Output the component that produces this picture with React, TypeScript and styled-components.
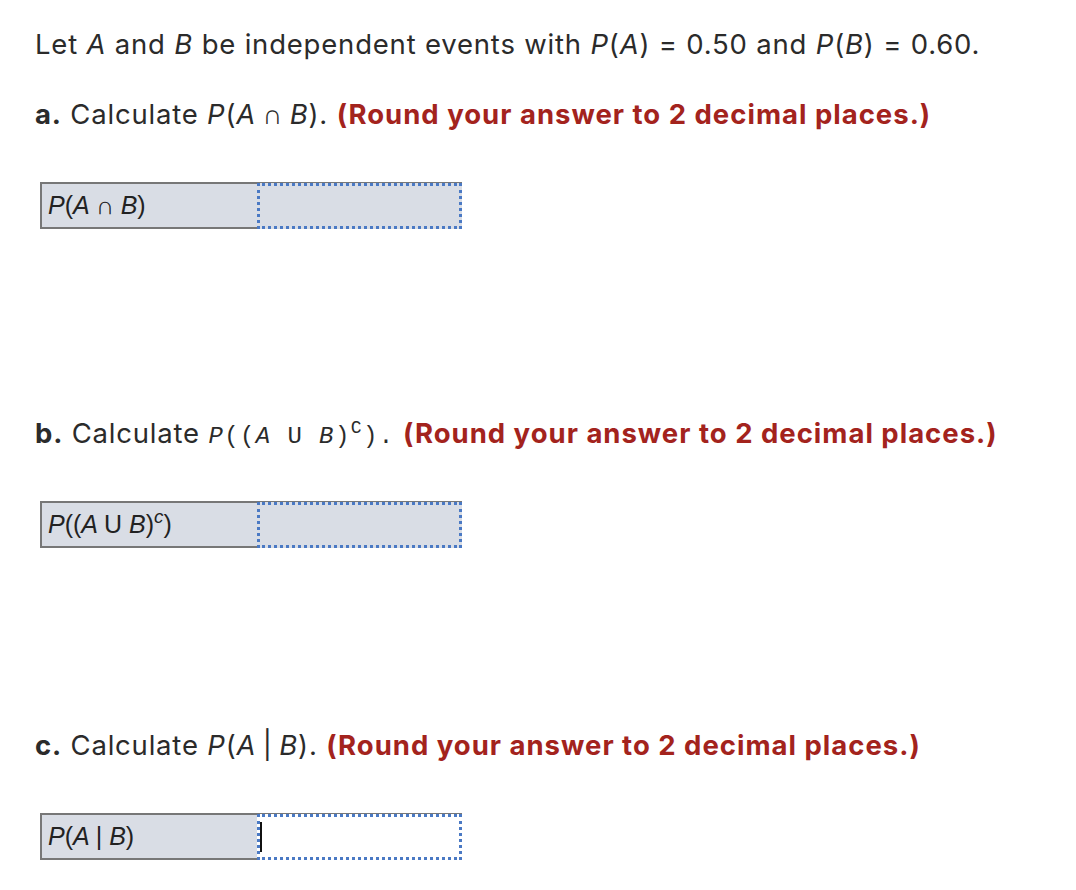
import React from 'react';
import styled, { createGlobalStyle } from 'styled-components';

const GlobalStyle = createGlobalStyle`
  body {
    margin: 0;
    background: #ffffff;
    font-family: Inter, "Open Sans", "Liberation Sans", sans-serif;
    color: #2b2b2b;
  }
`;

const Page = styled.div`
  padding: 24px 0 0 35px;
  width: 1041px;
`;

const Prompt = styled.p`
  margin: 0;
  font-size: 27.5px;
  line-height: 40px;
  letter-spacing: 0.8px;
  white-space: nowrap;
`;

const Part = styled.section<{ gap: number }>`
  margin-top: ${({ gap }) => gap}px;
`;

const Letter = styled.b`
  font-weight: 700;
`;

const Var = styled.i`
  font-style: italic;
`;

const Hint = styled.span`
  color: #a3231d;
  font-weight: 700;
  letter-spacing: 1px;
`;

const Mono = styled.span`
  font-family: "Liberation Mono", "Courier New", monospace;
  font-size: 24px;
  letter-spacing: 1.4px;
  line-height: 0;
`;

const Sup = styled.sup`
  font-size: 0.75em;
  line-height: 0;
  vertical-align: 0.55em;
`;

const Op = styled.span`
  margin: 0 -2px;
`;

const AnswerTable = styled.div`
  margin: 48px 0 0 5px;
  display: flex;
  width: 422px;
  height: 47px;
  box-sizing: border-box;
  border: 2px solid #777777;
  border-right: none;
  background: #d9dde5;
`;

const Label = styled.div`
  width: 215px;
  display: flex;
  align-items: center;
  padding-left: 6px;
  box-sizing: border-box;
  font-family: "Liberation Sans", Arial, sans-serif;
  font-size: 25px;
  font-style: italic;
  color: #222222;
`;

const LabelText = styled.span`
  white-space: pre;
`;

const Upright = styled.span`
  font-style: normal;
`;

const Input = styled.div<{ focused?: boolean }>`
  flex: 1;
  margin: -1px 0 -2px;
  border: 3px dotted #4a79c4;
  background: ${({ focused }) => (focused ? '#ffffff' : '#d9dde5')};
  display: flex;
  align-items: center;
`;

const Caret = styled.span`
  width: 2px;
  height: 30px;
  background: #111111;
`;

export default function App() {
  return (
    <Page>
      <GlobalStyle />
      <Prompt>
        Let <Var>A</Var> and <Var>B</Var> be independent events with <Var>P</Var>(<Var>A</Var>) = 0.50 and{' '}
        <Var>P</Var>(<Var>B</Var>) = 0.60.
      </Prompt>

      <Part gap={30}>
        <Prompt>
          <Letter>a.</Letter> Calculate <Var>P</Var>(<Var>A</Var> <Op>∩</Op> <Var>B</Var>).{' '}
          <Hint>(Round your answer to 2 decimal places.)</Hint>
        </Prompt>
        <AnswerTable>
          <Label>
            <LabelText>
              P<Upright>(</Upright>A <Upright>∩</Upright> B<Upright>)</Upright>
            </LabelText>
          </Label>
          <Input />
        </AnswerTable>
      </Part>

      <Part gap={184}>
        <Prompt>
          <Letter>b.</Letter> Calculate{' '}
          <Mono>
            <Var>P</Var>((<Var>A</Var> U <Var>B</Var>)<Sup>C</Sup>).
          </Mono>{' '}
          <Hint>(Round your answer to 2 decimal places.)</Hint>
        </Prompt>
        <AnswerTable>
          <Label>
            <LabelText>
              P<Upright>((</Upright>A <Upright>U</Upright> B<Upright>)</Upright>
              <Sup>c</Sup>
              <Upright>)</Upright>
            </LabelText>
          </Label>
          <Input />
        </AnswerTable>
      </Part>

      <Part gap={177}>
        <Prompt>
          <Letter>c.</Letter> Calculate <Var>P</Var>(<Var>A</Var> <Op>|</Op> <Var>B</Var>).{' '}
          <Hint>(Round your answer to 2 decimal places.)</Hint>
        </Prompt>
        <AnswerTable>
          <Label>
            <LabelText>
              P<Upright>(</Upright>A <Upright>|</Upright> B<Upright>)</Upright>
            </LabelText>
          </Label>
          <Input focused>
            <Caret />
          </Input>
        </AnswerTable>
      </Part>
    </Page>
  );
}
